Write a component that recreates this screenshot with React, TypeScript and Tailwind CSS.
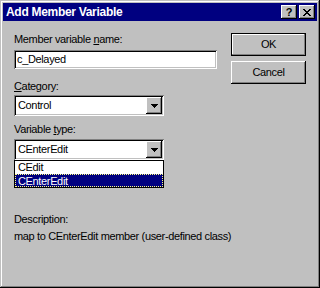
import React from "react";

const raised =
  "shadow-[inset_-1px_-1px_0_#000,inset_1px_1px_0_#fff,inset_-2px_-2px_0_#808080,inset_2px_2px_0_#c0c0c0]";
const sunken =
  "shadow-[inset_1px_1px_0_#808080,inset_-1px_-1px_0_#fff,inset_2px_2px_0_#000,inset_-2px_-2px_0_#c0c0c0]";

function Arrow() {
  return (
    <div className={`w-[16px] h-[17px] bg-[#c0c0c0] flex items-center justify-center ${raised}`}>
      <svg width="7" height="4" viewBox="0 0 7 4">
        <path d="M0 0h7v1H0zM1 1h5v1H1zM2 2h3v1H2zM3 3h1v1H3z" fill="#000" />
      </svg>
    </div>
  );
}

function Combo({ value }: { value: string }) {
  return (
    <div className={`w-[150px] h-[21px] bg-white flex items-center pl-[4px] pr-[2px] ${sunken}`}>
      <span className="flex-1 leading-[13px]">{value}</span>
      <Arrow />
    </div>
  );
}

function Button({ label, isDefault }: { label: string; isDefault?: boolean }) {
  return (
    <div
      className={`w-[75px] h-[23px] flex items-center justify-center bg-[#c0c0c0] ${
        isDefault ? "border border-black" : ""
      }`}
    >
      <div
        className={`w-full h-full flex items-center justify-center ${
          isDefault
            ? "shadow-[inset_-1px_-1px_0_#808080,inset_1px_1px_0_#fff]"
            : raised
        }`}
      >
        {label}
      </div>
    </div>
  );
}

export default function App() {
  return (
    <div
      className="w-[320px] h-[288px] bg-[#c0c0c0] p-[3px] flex flex-col text-[11px] tracking-[-0.35px] text-black shadow-[inset_-1px_-1px_0_#000,inset_1px_1px_0_#c0c0c0,inset_-2px_-2px_0_#808080,inset_2px_2px_0_#fff]"
      style={{ fontFamily: '"Liberation Sans", Arial, sans-serif' }}
    >
      {/* Title bar */}
      <div className="h-[18px] bg-[#000080] flex items-center justify-between pl-[3px] pr-[2px]">
        <span className="text-white font-bold text-[12px] tracking-[-0.3px] leading-[14px]">Add Member Variable</span>
        <div className="flex gap-[2px]">
          <div className={`w-[16px] h-[14px] bg-[#c0c0c0] flex items-center justify-center font-bold text-[11px] leading-[11px] ${raised}`}>
            ?
          </div>
          <div className={`w-[16px] h-[14px] bg-[#c0c0c0] flex items-center justify-center ${raised}`}>
            <svg width="8" height="7" viewBox="0 0 8 7">
              <path
                d="M0 0h2v1H0zM6 0h2v1H6zM1 1h2v1H1zM5 1h2v1H5zM2 2h4v1H2zM3 3h2v1H3zM2 4h4v1H2zM1 5h2v1H1zM5 5h2v1H5zM0 6h2v1H0zM6 6h2v1H6z"
                fill="#000"
              />
            </svg>
          </div>
        </div>
      </div>

      {/* Body */}
      <div className="flex pl-[11px] pt-[12px] gap-[14px]">
        <div className="w-[203px] flex flex-col">
          <div className="leading-[13px]">
            Member variable <u>n</u>ame:
          </div>
          <div className={`mt-[4px] h-[19px] bg-white flex items-center pl-[3px] ${sunken}`}>
            <span className="leading-[13px]">c_Delayed</span>
          </div>

          <div className="mt-[11px] leading-[13px]">
            <u>C</u>ategory:
          </div>
          <div className="mt-[2px]">
            <Combo value="Control" />
          </div>

          <div className="mt-[7px] leading-[13px]">
            Variable <u>t</u>ype:
          </div>
          <div className="mt-[3px]">
            <Combo value="CEnterEdit" />
          </div>
          <div className="w-[150px] border border-black bg-white">
            <div className="h-[13px] leading-[13px] pl-[3px]">CEdit</div>
            <div className="h-[13px] leading-[12px] bg-[#000080] text-white border border-dotted border-[#ffff80] pl-[2px]">
              CEnterEdit
            </div>
          </div>

          <div className="mt-[25px] leading-[13px]">Description:</div>
          <div className="mt-[4px] leading-[13px] whitespace-nowrap">
            map to CEnterEdit member (user-defined class)
          </div>
        </div>

        <div className="w-[75px] flex flex-col gap-[5px]">
          <Button label="OK" isDefault />
          <Button label="Cancel" />
        </div>
      </div>
    </div>
  );
}
